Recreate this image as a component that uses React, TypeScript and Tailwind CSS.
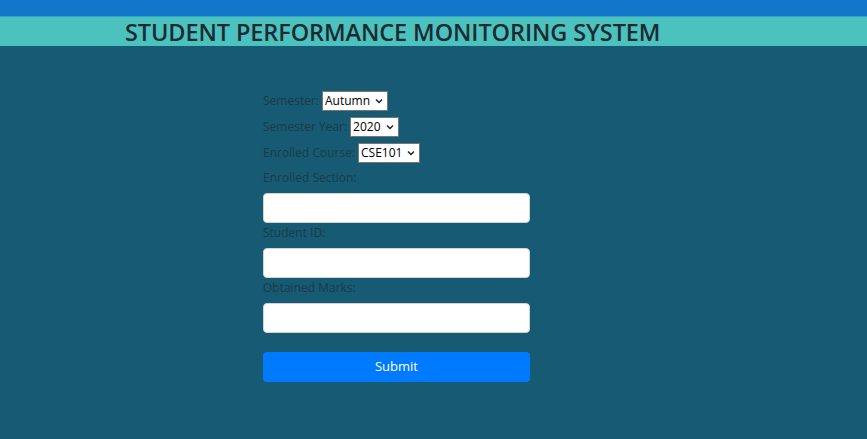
function Chevron() {
  return (
    <svg width="8" height="6" viewBox="0 0 8 6" className="ml-[5px]">
      <path d="M1 1.5l3 3 3-3" fill="none" stroke="#222" strokeWidth="1.5" />
    </svg>
  );
}

function Dropdown({ value }: { value: string }) {
  return (
    <div className="inline-flex h-[20px] items-center border border-[#767676] bg-white pl-[2px] pr-[4px] text-[12px] text-black">
      {value}
      <Chevron />
    </div>
  );
}

function Field({ label }: { label: string }) {
  return (
    <>
      <label className="mt-[1px] block leading-[18px]">{label}</label>
      <input className="mt-[6px] block h-[30px] w-[267px] rounded-[4px] border border-[#ced4da] bg-white" />
    </>
  );
}

export default function App() {
  return (
    <div className="min-h-[439px] bg-[#165a74] font-['Open_Sans',sans-serif] text-[12px] text-[#1c3a48]">
      <div className="h-[16px] bg-[#1277cb]" />
      <div className="h-[30px] border-t border-[#2fa5c8] bg-[#4cc2bf] pl-[125px]">
        <h1 className="text-[23.5px] font-semibold leading-[30px] tracking-[-0.1px] text-[#1c2b33]">
          STUDENT PERFORMANCE MONITORING SYSTEM
        </h1>
      </div>
      <form className="flex flex-col pl-[263px] pt-[45px]">
        <div className="flex h-[20px] items-center gap-[3px]">
          Semester: <Dropdown value="Autumn" />
        </div>
        <div className="mt-[6px] flex h-[20px] items-center gap-[3px]">
          Semester Year: <Dropdown value="2020" />
        </div>
        <div className="mt-[6px] flex h-[20px] items-center gap-[3px]">
          Enrolled Course: <Dropdown value="CSE101" />
        </div>
        <label className="mt-[6px] block leading-[18px]">Enrolled Section:</label>
        <input className="mt-[6px] block h-[30px] w-[267px] rounded-[4px] border border-[#ced4da] bg-white" />
        <Field label="Student ID:" />
        <Field label="Obtained Marks:" />
        <button
          type="button"
          className="mt-[19px] h-[30px] w-[267px] rounded-[4px] bg-[#007bff] text-[13px] text-white"
        >
          Submit
        </button>
      </form>
    </div>
  );
}
